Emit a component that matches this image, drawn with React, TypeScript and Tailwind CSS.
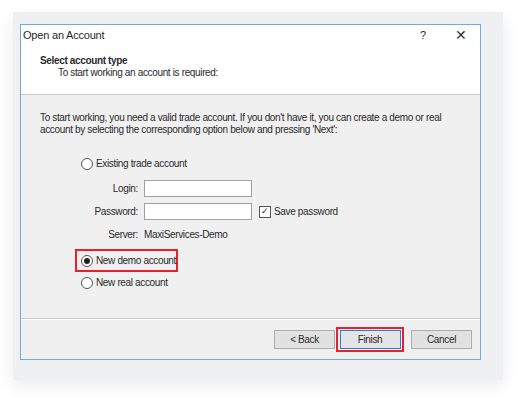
const font = { fontFamily: '"Liberation Sans", Arial, sans-serif' };

function Radio({ checked = false }: { checked?: boolean }) {
  return (
    <span className="flex h-[12px] w-[12px] shrink-0 items-center justify-center rounded-full border border-[#555] bg-white">
      {checked && <span className="h-[6px] w-[6px] rounded-full bg-[#222]" />}
    </span>
  );
}

function Field({ label }: { label: string }) {
  return (
    <div className="flex items-center">
      <span className="w-[104px] pr-[6px] text-right">{label}</span>
      <div className="h-[17px] w-[108px] border border-[#a0a0a0] bg-white" />
    </div>
  );
}

function Btn({ label, active = false }: { label: string; active?: boolean }) {
  return (
    <div
      className={
        active
          ? "flex h-[19px] w-[61px] items-center justify-center border border-[#2a7fd4] bg-[#e5e5e5]"
          : "flex h-[19px] w-[61px] items-center justify-center border border-[#adadad] bg-[#e1e1e1]"
      }
    >
      {label}
    </div>
  );
}

export default function App() {
  return (
    <div
      className="h-[398px] w-[524px] bg-white pl-[13px] pt-[12px] text-[10px] tracking-[-0.35px] text-[#2a2a2a]"
      style={font}
    >
      <div className="h-[368px] w-[490px] bg-[#eef0f2] pl-[7px] pt-[12px] shadow-[0_6px_16px_rgba(0,0,0,0.08)]">
        <div className="flex h-[336px] w-[461px] flex-col border border-[#70aae0] bg-[#f0f0f0]">
          {/* title bar */}
          <div className="flex h-[21px] items-center bg-white pl-[2px] text-[11px] tracking-[-0.2px]">
            <span className="flex-1">Open an Account</span>
            <span className="w-[38px] text-center">?</span>
            <span className="w-[38px] text-center text-[14px] text-[#333]">✕</span>
          </div>
          {/* header */}
          <div className="flex h-[49px] flex-col border-b border-[#c9c9c9] bg-white pl-[19px] pt-[9px]">
            <span className="h-[12px] font-bold leading-[12px]">Select account type</span>
            <span className="h-[12px] pl-[18px] leading-[12px]">To start working an account is required:</span>
          </div>
          {/* body */}
          <div className="flex h-[223px] flex-col pl-[19px] pt-[17px] leading-[12px]">
            <p className="w-[436px]">
              To start working, you need a valid trade account. If you don't have it, you can create a demo or real
              account by selecting the corresponding option below and pressing 'Next':
            </p>
            <div className="mt-[22px] flex items-center gap-[3px] pl-[41px]">
              <Radio />
              <span>Existing trade account</span>
            </div>
            <div className="mt-[10px]">
              <Field label="Login:" />
            </div>
            <div className="mt-[6px] flex items-center">
              <Field label="Password:" />
              <span className="ml-[7px] flex h-[12px] w-[12px] items-center justify-center border border-[#555] bg-white text-[9px] leading-none">
                ✓
              </span>
              <span className="ml-[3px]">Save password</span>
            </div>
            <div className="mt-[9px] flex items-center">
              <span className="w-[104px] pr-[6px] text-right">Server:</span>
              <span>MaxiServices-Demo</span>
            </div>
            <div className="ml-[35px] mt-[8px] flex h-[23px] w-[103px] items-center gap-[3px] whitespace-nowrap border-2 border-[#e8202a] pl-[4px]">
              <Radio checked />
              <span>New demo account</span>
            </div>
            <div className="mt-[5px] flex items-center gap-[3px] pl-[41px]">
              <Radio />
              <span>New real account</span>
            </div>
          </div>
          {/* footer */}
          <div className="flex flex-1 items-center justify-end border-t border-[#c9c9c9] pr-[8px] shadow-[inset_0_1px_0_#fff]">
            <Btn label="< Back" />
            <div className="ml-[1px] flex h-[25px] w-[68px] items-center justify-center border-2 border-[#e8202a]">
              <Btn label="Finish" active />
            </div>
            <div className="ml-[7px]">
              <Btn label="Cancel" />
            </div>
          </div>
        </div>
      </div>
    </div>
  );
}
